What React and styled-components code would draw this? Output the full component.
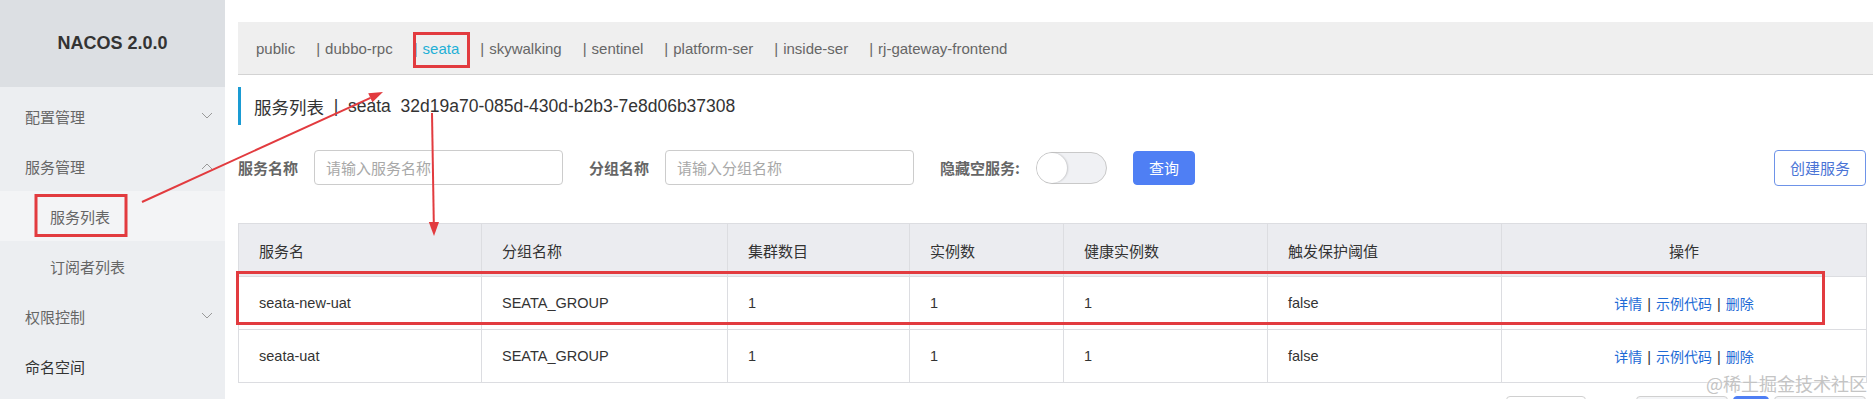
import React from 'react';
import styled, { createGlobalStyle } from 'styled-components';

const GlobalStyle = createGlobalStyle`
  html, body {
    margin: 0;
    padding: 0;
    background: #fff;
  }
  body {
    font-family: "Liberation Sans", "Noto Sans CJK SC", Arial, sans-serif;
    color: #333;
  }
  * {
    box-sizing: border-box;
  }
`;

const Page = styled.div`
  position: relative;
  display: flex;
  align-items: flex-start;
  width: 1873px;
  height: 399px;
  overflow: hidden;
  background: #fff;
`;

const Sidebar = styled.aside`
  width: 225px;
  height: 399px;
  flex-shrink: 0;
  background: #eceef1;
  display: flex;
  flex-direction: column;
`;

const Brand = styled.div`
  height: 87px;
  flex-shrink: 0;
  background: #dcdfe3;
  display: flex;
  align-items: center;
  justify-content: center;
  font-weight: bold;
  font-size: 18px;
  color: #333;
`;

const Menu = styled.ul`
  list-style: none;
  margin: 0;
  padding: 4px 0 0;
`;

const MenuItem = styled.li`
  height: 50px;
  display: flex;
  align-items: center;
  justify-content: space-between;
  padding: ${(p) => (p.$sub ? '0 12px 0 50px' : '0 12px 0 25px')};
  font-family: "Noto Sans CJK SC", sans-serif;
  font-size: 15px;
  color: ${(p) => (p.$strong ? '#333' : '#666')};
  background: ${(p) => (p.$active ? '#f3f4f6' : 'transparent')};
`;

const Main = styled.main`
  flex: 1;
  min-width: 0;
  padding: 22px 7px 0 13px;
`;

const TabBar = styled.div`
  height: 53px;
  margin-right: -7px;
  background: #efefef;
  border-bottom: 1px solid #d3d3d3;
  display: flex;
  align-items: center;
  padding-left: 18px;
  font-size: 15px;
  color: #666;
`;

const Tab = styled.span`
  margin-right: 21px;
  white-space: nowrap;
  color: ${(p) => (p.$active ? '#1fb0d6' : '#666')};
`;

const Pipe = styled.span`
  margin-right: 5px;
  color: #666;
`;

const Title = styled.h1`
  margin: 12px 0 0;
  height: 38px;
  border-left: 3px solid #1a9bd3;
  padding-left: 13px;
  display: flex;
  align-items: center;
  font-size: 17.5px;
  font-weight: normal;
  color: #333;
  white-space: pre;
`;

const TitleCjk = styled.span`
  font-family: "Noto Sans CJK SC", sans-serif;
`;

const SearchRow = styled.div`
  margin-top: 25px;
  height: 35px;
  display: flex;
  align-items: center;
`;

const Field = styled.div`
  display: flex;
  align-items: center;
  gap: 16px;
  margin-right: 26px;
`;

const Label = styled.label`
  font-family: "Noto Sans CJK SC", sans-serif;
  font-size: 15px;
  font-weight: bold;
  color: #666;
  white-space: nowrap;
`;

const Input = styled.input`
  width: 249px;
  height: 35px;
  border: 1px solid #cccccc;
  border-radius: 4px;
  padding: 0 11px;
  font-family: "Noto Sans CJK SC", sans-serif;
  font-size: 15px;
  color: #333;
  outline: none;
  &::placeholder {
    color: #a8a8a8;
  }
`;

const Switch = styled.div`
  position: relative;
  width: 71px;
  height: 32px;
  border-radius: 16px;
  background: #f0f1f4;
  border: 1px solid #c9c9c9;
`;

const Knob = styled.span`
  position: absolute;
  left: 0;
  top: 0;
  width: 30px;
  height: 30px;
  border-radius: 50%;
  background: #fff;
  box-shadow: 1px 0 2px rgba(0, 0, 0, 0.18);
`;

const Button = styled.button`
  height: ${(p) => (p.$primary ? '34px' : '36px')};
  padding: 0 15px;
  border-radius: 4px;
  font-family: "Noto Sans CJK SC", sans-serif;
  font-size: 15px;
  cursor: pointer;
  border: 1px solid ${(p) => (p.$primary ? '#4f7ff4' : '#6e93e8')};
  background: ${(p) => (p.$primary ? '#4f7ff4' : '#fff')};
  color: ${(p) => (p.$primary ? '#fff' : '#4a74d6')};
  margin-left: ${(p) => (p.$push ? 'auto' : '0')};
`;

const Table = styled.table`
  margin-top: 38px;
  width: 100%;
  border-collapse: collapse;
  table-layout: fixed;
  font-size: 14.5px;
  color: #333;
`;

const Th = styled.th`
  height: 53px;
  background: #ebecf0;
  border: 1px solid #dcdde1;
  padding: 0 20px;
  text-align: ${(p) => (p.$center ? 'center' : 'left')};
  font-family: "Noto Sans CJK SC", sans-serif;
  font-weight: normal;
  font-size: 15px;
  color: #333;
`;

const Td = styled.td`
  height: 53px;
  border: 1px solid #dcdde1;
  padding: 0 20px;
  text-align: ${(p) => (p.$center ? 'center' : 'left')};
  white-space: nowrap;
  color: #333;
`;

const Link = styled.a`
  color: #1e6bd6;
  font-family: "Noto Sans CJK SC", sans-serif;
  font-size: 14px;
  text-decoration: none;
`;

const Sep = styled.span`
  margin: 0 5px;
  color: #333;
`;

const Pager = styled.div`
  margin-top: 13px;
  display: flex;
  justify-content: flex-end;
  gap: 5px;
`;

const PageBox = styled.div`
  height: 32px;
  width: ${(p) => p.$w}px;
  border-radius: 4px;
  border: 1px solid ${(p) => (p.$blue ? '#4f7ff4' : '#d0d0d0')};
  background: ${(p) => (p.$blue ? '#4f7ff4' : p.$grey ? '#f4f5f7' : '#fff')};
  margin-right: ${(p) => (p.$gap ? '45px' : '0')};
`;

const Overlay = styled.svg`
  position: absolute;
  left: 0;
  top: 0;
  pointer-events: none;
`;

const Watermark = styled.span`
  position: absolute;
  top: 370px;
  right: 6px;
  font-family: "Noto Sans CJK SC", sans-serif;
  font-size: 18px;
  line-height: 26px;
  color: #c4c4c4;
  text-shadow: 0 0 2px #fff;
  pointer-events: none;
`;

const Chevron = ({ up }) => (
  <svg width="12" height="8" viewBox="0 0 12 8">
    <path d={up ? 'M1 7 L6 2 L11 7' : 'M1 1 L6 6 L11 1'} fill="none" stroke="#999" strokeWidth="1" />
  </svg>
);

const tabs = ['public', 'dubbo-rpc', 'seata', 'skywalking', 'sentinel', 'platform-ser', 'inside-ser', 'rj-gateway-frontend'];

const columns = [
  { title: '服务名', w: 243 },
  { title: '分组名称', w: 246 },
  { title: '集群数目', w: 182 },
  { title: '实例数', w: 154 },
  { title: '健康实例数', w: 204 },
  { title: '触发保护阈值', w: 234 },
  { title: '操作', w: 365, center: true }
];

const rows = [
  { name: 'seata-new-uat', group: 'SEATA_GROUP', clusters: 1, instances: 1, healthy: 1, threshold: 'false' },
  { name: 'seata-uat', group: 'SEATA_GROUP', clusters: 1, instances: 1, healthy: 1, threshold: 'false' }
];

const RED = '#e23b3f';

const App = () => {
  return (
    <>
      <GlobalStyle />
      <Page>
        <Sidebar>
          <Brand>NACOS 2.0.0</Brand>
          <Menu>
            <MenuItem>
              配置管理 <Chevron />
            </MenuItem>
            <MenuItem>
              服务管理 <Chevron up />
            </MenuItem>
            <MenuItem $sub $active>
              服务列表
            </MenuItem>
            <MenuItem $sub>订阅者列表</MenuItem>
            <MenuItem>
              权限控制 <Chevron />
            </MenuItem>
            <MenuItem $strong>命名空间</MenuItem>
          </Menu>
        </Sidebar>

        <Main>
          <TabBar>
            {tabs.map((t, i) => (
              <Tab key={t} $active={t === 'seata'}>
                {i > 0 && <Pipe>|</Pipe>}
                {t}
              </Tab>
            ))}
          </TabBar>

          <Title>
            <TitleCjk>服务列表</TitleCjk>
            {'  |  seata  32d19a70-085d-430d-b2b3-7e8d06b37308'}
          </Title>

          <SearchRow>
            <Field>
              <Label>服务名称</Label>
              <Input placeholder="请输入服务名称" />
            </Field>
            <Field>
              <Label>分组名称</Label>
              <Input placeholder="请输入分组名称" />
            </Field>
            <Field>
              <Label>隐藏空服务:</Label>
              <Switch>
                <Knob />
              </Switch>
            </Field>
            <Button $primary>查询</Button>
            <Button $push>创建服务</Button>
          </SearchRow>

          <Table>
            <colgroup>
              {columns.map((c) => (
                <col key={c.title} style={{ width: c.w }} />
              ))}
            </colgroup>
            <thead>
              <tr>
                {columns.map((c) => (
                  <Th key={c.title} $center={c.center}>
                    {c.title}
                  </Th>
                ))}
              </tr>
            </thead>
            <tbody>
              {rows.map((r) => (
                <tr key={r.name}>
                  <Td>{r.name}</Td>
                  <Td>{r.group}</Td>
                  <Td>{r.clusters}</Td>
                  <Td>{r.instances}</Td>
                  <Td>{r.healthy}</Td>
                  <Td>{r.threshold}</Td>
                  <Td $center>
                    <Link>详情</Link>
                    <Sep>|</Sep>
                    <Link>示例代码</Link>
                    <Sep>|</Sep>
                    <Link>删除</Link>
                  </Td>
                </tr>
              ))}
            </tbody>
          </Table>

          <Pager>
            <PageBox $w={80} $gap />
            <PageBox $w={92} $grey />
            <PageBox $w={36} $blue />
            <PageBox $w={92} $grey />
          </Pager>
        </Main>

        <Overlay width="1873" height="399" viewBox="0 0 1873 399">
          <rect x="36" y="195.5" width="90" height="40" fill="none" stroke={RED} strokeWidth="3" />
          <rect x="414.5" y="33.5" width="54" height="33" fill="none" stroke={RED} strokeWidth="3" />
          <rect x="237.5" y="272.5" width="1586" height="51" fill="none" stroke={RED} strokeWidth="3" />
          <line x1="142" y1="202" x2="370.5" y2="97.8" stroke={RED} strokeWidth="2" />
          <polygon points="383,92 372.4,102.3 368.2,93.3" fill={RED} />
          <line x1="432" y1="113" x2="433.8" y2="223" stroke={RED} strokeWidth="2" />
          <polygon points="434,236 428.8,222 439,222" fill={RED} />
        </Overlay>

        <Watermark>@稀土掘金技术社区</Watermark>
      </Page>
    </>
  );
};

export default App;
